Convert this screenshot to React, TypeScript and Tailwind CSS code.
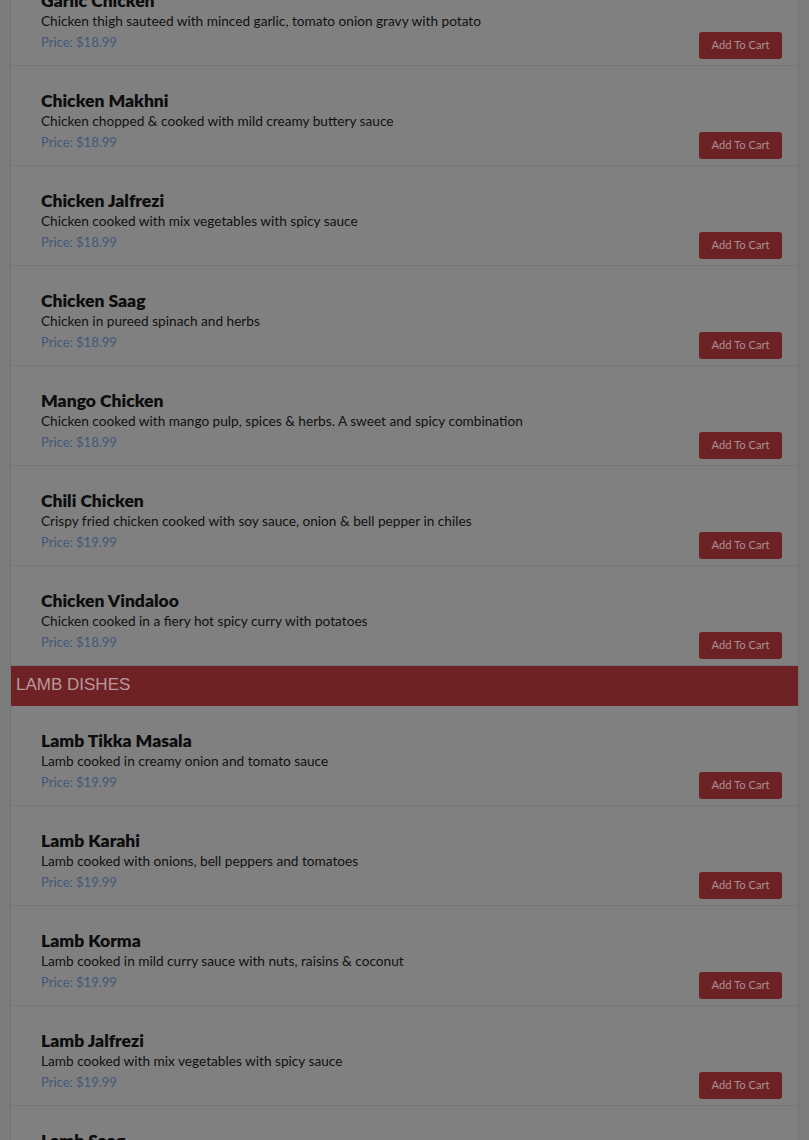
import React from 'react';

interface Dish {
  name: string;
  desc: string;
  price: string;
}

const chicken: Dish[] = [
  { name: 'Garlic Chicken', desc: 'Chicken thigh sauteed with minced garlic, tomato onion gravy with potato', price: '$18.99' },
  { name: 'Chicken Makhni', desc: 'Chicken chopped & cooked with mild creamy buttery sauce', price: '$18.99' },
  { name: 'Chicken Jalfrezi', desc: 'Chicken cooked with mix vegetables with spicy sauce', price: '$18.99' },
  { name: 'Chicken Saag', desc: 'Chicken in pureed spinach and herbs', price: '$18.99' },
  { name: 'Mango Chicken', desc: 'Chicken cooked with mango pulp, spices & herbs. A sweet and spicy combination', price: '$18.99' },
  { name: 'Chili Chicken', desc: 'Crispy fried chicken cooked with soy sauce, onion & bell pepper in chiles', price: '$19.99' },
  { name: 'Chicken Vindaloo', desc: 'Chicken cooked in a fiery hot spicy curry with potatoes', price: '$18.99' },
];

const lamb: Dish[] = [
  { name: 'Lamb Tikka Masala', desc: 'Lamb cooked in creamy onion and tomato sauce', price: '$19.99' },
  { name: 'Lamb Karahi', desc: 'Lamb cooked with onions, bell peppers and tomatoes', price: '$19.99' },
  { name: 'Lamb Korma', desc: 'Lamb cooked in mild curry sauce with nuts, raisins & coconut', price: '$19.99' },
  { name: 'Lamb Jalfrezi', desc: 'Lamb cooked with mix vegetables with spicy sauce', price: '$19.99' },
  { name: 'Lamb Saag', desc: 'Lamb cooked in pureed spinach and herbs', price: '$19.99' },
];

const DishRow: React.FC<{ dish: Dish }> = ({ dish }) => (
  <div className="h-[100px] border-b border-[#767676] pl-[30px] pr-[16px] pt-[25px] flex justify-between">
    <div>
      <div className="text-[17.5px] leading-[20px] font-extrabold text-[#0d0d0d]">{dish.name}</div>
      <div className="text-[13.65px] leading-[20px] text-[#111]">{dish.desc}</div>
      <div className="text-[13px] leading-[22px] text-[#42597a]">Price: {dish.price}</div>
    </div>
    <div className="flex items-start pt-[41px]">
      <button className="w-[83px] h-[27px] rounded-[3px] bg-[#6c2125] text-[11.2px] text-[#ab9093]">
        Add To Cart
      </button>
    </div>
  </div>
);

export default function App() {
  return (
    <div className="h-[1140px] overflow-hidden bg-[#7c7c7c] px-[10px]" style={{ fontFamily: 'Lato, "Noto Sans", sans-serif' }}>
      <div className="-mt-[34px] bg-[#808080] border-x border-[#737373]">
        {chicken.map((d) => (
          <DishRow key={d.name} dish={d} />
        ))}
        <div className="h-[40px] bg-[#6e2226] pl-[5px] pb-[3px] flex items-center text-[17px] text-[#b8999b]" style={{ fontFamily: '"Liberation Sans", Arial, sans-serif' }}>
          LAMB DISHES
        </div>
        {lamb.map((d) => (
          <DishRow key={d.name} dish={d} />
        ))}
      </div>
    </div>
  );
}
